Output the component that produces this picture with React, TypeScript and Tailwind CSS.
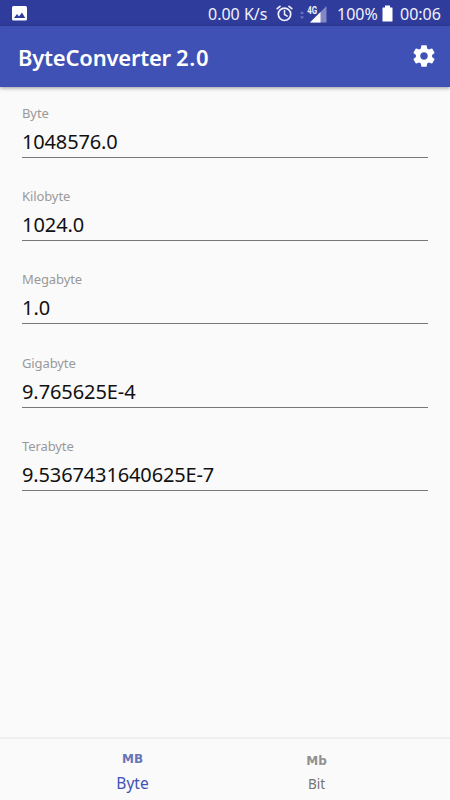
import React from 'react';

const fields = [
  { label: 'Byte', value: '1048576.0', spacing: 'tracking-[-0.15px]' },
  { label: 'Kilobyte', value: '1024.0', spacing: 'tracking-[-0.05px]' },
  { label: 'Megabyte', value: '1.0', spacing: 'tracking-[0px]' },
  { label: 'Gigabyte', value: '9.765625E-4', spacing: 'tracking-[-0.08px]' },
  { label: 'Terabyte', value: '9.5367431640625E-7', spacing: 'tracking-[-0.13px]' },
];

function StatusBar() {
  return (
    <header className="flex h-[26px] items-center bg-[#303c9c] pl-3 pr-[8px] text-[16px] leading-[26px] text-[#f0f1fb]">
      <svg className="mt-px h-[15px] w-[15px]" viewBox="0 0 15 15">
        <rect width="15" height="14.5" rx="1.5" fill="#fff" />
        <path d="M2 12l3-4 2 2.4L10 6.5 13.2 12z" fill="#303c9c" />
      </svg>
      <span className="ml-auto mt-[2px] w-[60px] whitespace-nowrap">0.00 K/s</span>
      <svg className="ml-[8px] mt-px h-[17px] w-[17px]" viewBox="0 0 17 17" fill="none" stroke="#f0f1fb" strokeLinecap="round">
        <circle cx="8.5" cy="9.3" r="6.2" strokeWidth="1.7" />
        <path d="M8.5 5.5v4l2.700 1.700" strokeWidth="1.5" />
        <path d="M1.2 3.6L4 1.3M15.8 3.6L13 1.3" strokeWidth="1.7" />
      </svg>
      <svg className="ml-[7px] mt-[3px] h-[20px] w-[28px]" viewBox="0 0 28 20">
        <path d="M0 8.800l2-2.600 2 2.600zM0 11.500l2 2.600 2-2.600z" fill="#747dc0" />
        <path d="M26.500 1v16.500H10z" fill="#8188c5" />
        <path d="M20.500 7v10.500H10z" fill="#fff" />
        <path d="M6.500 0h11v9.500h-11z" fill="#303c9c" />
        <text x="7.200" y="8.500" fontSize="10" fontWeight="700" fontFamily="Roboto, sans-serif" textLength="10" lengthAdjust="spacingAndGlyphs" fill="#f0f1fb">4G</text>
      </svg>
      <span className="ml-[9px] mt-[2px] w-[41px] whitespace-nowrap">100%</span>
      <svg className="ml-[4px] mt-px h-[17px] w-[11px]" viewBox="0 0 11 17">
        <path d="M3 0.500h5v2h2q.5 0 .5.5v13q0 .5-.5.5H1q-.5 0-.5-.5V3q0-.5.5-.5h2z" fill="#fff" />
      </svg>
      <span className="ml-[7px] mt-[2px] w-[42px] whitespace-nowrap">00:06</span>
    </header>
  );
}

function TitleBar() {
  return (
    <div className="relative flex h-[61px] items-center justify-between bg-[#3f51b5] pl-[18px] pr-[13px] text-white shadow-[0_1px_4px_rgba(0,0,0,0.4)]">
      <h1 className="mt-px flex gap-[5px] whitespace-nowrap text-[22px] font-semibold leading-[30px]">
        <span className="tracking-[-0.22px]">ByteConverter</span>
        <span className="tracking-[0.700px]">2.0</span>
      </h1>
      <svg className="-mt-px h-[26px] w-[26px]" viewBox="0 0 24 24" fill="#fff">
        <path d="M19.430 12.980c.04-.32.07-.64.07-.98s-.03-.66-.07-.98l2.110-1.650c.19-.15.24-.42.12-.64l-2-3.460c-.12-.22-.39-.3-.61-.22l-2.490 1c-.52-.4-1.080-.73-1.690-.98l-.38-2.650C14.460 2.180 14.250 2 14 2h-4c-.25 0-.46.18-.49.42l-.38 2.650c-.61.25-1.170.59-1.690.98l-2.490-1c-.23-.09-.49 0-.61.22l-2 3.460c-.13.22-.07.49.12.64l2.110 1.650c-.04.32-.07.65-.07.98s.03.66.07.98l-2.110 1.650c-.19.15-.24.42-.12.64l2 3.460c.12.22.39.3.61.22l2.490-1c.52.4 1.080.73 1.690.98l.38 2.650c.03.24.24.42.49.42h4c.25 0 .46-.18.49-.42l.38-2.650c.61-.25 1.170-.59 1.690-.98l2.490 1c.23.09.49 0 .61-.22l2-3.460c.12-.22.07-.49-.12-.64l-2.110-1.650zM12 15.500c-1.930 0-3.500-1.570-3.500-3.500s1.570-3.500 3.500-3.500 3.500 1.570 3.500 3.500-1.570 3.500-3.500 3.500z" />
      </svg>
    </div>
  );
}

export default function App() {
  return (
    <div className="flex h-[800px] w-[450px] flex-col overflow-hidden bg-[#fafafa] font-['Noto_Sans',sans-serif]">
      <StatusBar />
      <TitleBar />
      <main className="flex flex-1 flex-col gap-[29.240px] px-[22px] pt-[17px]">
        {fields.map((field) => (
          <label key={field.label} className="flex h-[54px] flex-col border-b border-[#777]">
            <span className="h-[18px] text-[13px] leading-[18px] tracking-[-0.1px] text-[#999]">{field.label}</span>
            <span className={`mt-[6px] h-[28px] whitespace-nowrap text-[20px] leading-[28px] text-[#111] ${field.spacing}`}>{field.value}</span>
          </label>
        ))}
      </main>
      <nav className="grid h-[63px] grid-cols-[265px_103px] border-t-2 border-[#efefef] text-center">
        <button className="flex flex-col items-center pt-[12px] text-[#3f51b5]">
          <span className="font-['DejaVu_Sans'] text-[12px] font-bold leading-[16px] text-[#6674b8]">MB</span>
          <span className="mt-[5px] text-[15.500px] leading-[22px]">Byte</span>
        </button>
        <button className="flex flex-col items-center pt-[14px] text-[#737373]">
          <span className="font-['DejaVu_Sans'] text-[12px] font-bold leading-[16px] text-[#909090]">Mb</span>
          <span className="mt-[5px] text-[13.500px] leading-[20px]">Bit</span>
        </button>
      </nav>
    </div>
  );
}
